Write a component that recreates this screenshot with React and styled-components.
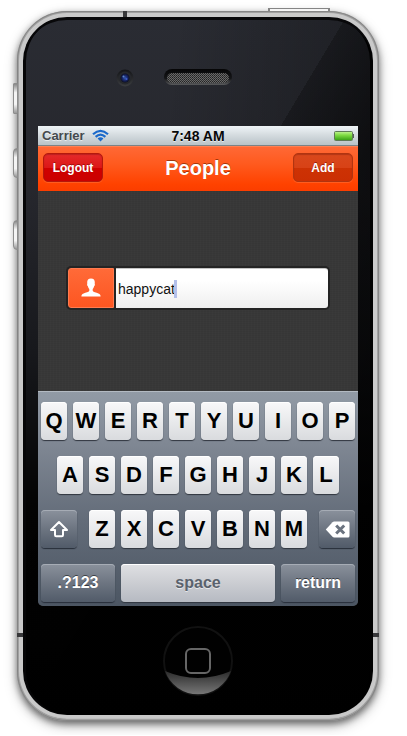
import React, { useState } from "react";
import styled, { createGlobalStyle, css } from "styled-components";

const GlobalStyle = createGlobalStyle`
  *, *::before, *::after { box-sizing: border-box; }
  body {
    margin: 0;
    background: #fff;
    font-family: "Liberation Sans", Arial, sans-serif;
  }
  button, input { font-family: inherit; margin: 0; }
`;

const Page = styled.main`
  padding: 11px 28px 14px 17px;
`;

const Phone = styled.div`
  position: relative;
  padding: 6px;
  border-radius: 50px;
  background: #c9c9c9;
  box-shadow:
    inset 0 0 0 1px #858585,
    inset 0 0 0 2px #a0a0a0,
    inset 0 -2px 1px #777,
    0 3px 7px rgba(0, 0, 0, 0.5),
    0 5px 14px rgba(0, 0, 0, 0.22);
`;

const Glass = styled.div`
  position: relative;
  padding: 0 15px;
  border-radius: 44px;
  background:
    linear-gradient(121deg, transparent 42%, rgba(0, 0, 0, 0.25) 42%, rgba(0, 0, 0, 0.5) 55%),
    linear-gradient(97deg, transparent 35%, rgba(0, 0, 0, 0.4) 100%),
    linear-gradient(#2a2c33, #26272d 25%, #17181c 48%, #030303 70%, #000);
  box-shadow: inset 0 3px 0 #08080a, inset 3px 0 0 #060607, inset -3px 0 0 #000;
`;

const sideVariants = {
  mute: css`top: 72px; height: 31px;`,
  up: css`top: 137px; height: 30px;`,
  down: css`top: 209px; height: 30px;`,
};

const SideButton = styled.span`
  position: absolute;
  left: -4px;
  width: 5px;
  border: 1px solid #8d8d8d;
  border-radius: ${(p) => (p.$kind === "mute" ? "1px" : "4px 0 0 4px")};
  background: linear-gradient(#888, #f4f4f4 30%, #f4f4f4 70%, #999);
  ${(p) => sideVariants[p.$kind]}
`;

const PowerButton = styled.span`
  position: absolute;
  top: -3px;
  right: 49px;
  width: 62px;
  height: 4px;
  border: 1px solid #858585;
  border-left-width: 2px;
  border-right-width: 2px;
  background: #f5f5f5;
`;

const seamVariants = {
  top: css`left: 106px; top: 0; width: 4px; height: 6px;`,
  left: css`left: 0; bottom: 84px; width: 6px; height: 4px;`,
  right: css`right: 0; bottom: 84px; width: 6px; height: 4px;`,
};

const Seam = styled.span`
  position: absolute;
  background: #38383a;
  ${(p) => seamVariants[p.$edge]}
`;

const TopBezel = styled.div`
  display: grid;
  grid-template-columns: 1fr auto 1fr;
  align-items: center;
  height: 109px;
  padding-top: 12px;
`;

const CameraSlot = styled.div`
  display: flex;
  justify-content: flex-end;
  padding-right: 30px;
`;

const BottomBezel = styled.div`
  display: flex;
  align-items: center;
  justify-content: center;
  height: 109px;
`;

const HomeButton = styled.button`
  width: 70px;
  height: 70px;
  padding: 0;
  border: 0;
  border-radius: 50%;
  background: #000;
  svg { display: block; }
`;

const Screen = styled.section`
  overflow: hidden;
  border-radius: 0 0 5px 5px;
  background: #373737;
`;

const StatusBar = styled.div`
  display: grid;
  grid-template-columns: 1fr auto 1fr;
  align-items: center;
  height: 20px;
  padding: 0 4px;
  border-bottom: 1px solid #7d8286;
  background: linear-gradient(#eff4f7, #d3dade 50%, #b9c3c8);
  text-shadow: 0 1px 0 rgba(255, 255, 255, 0.6);
`;

const Carrier = styled.span`
  display: flex;
  align-items: center;
  gap: 7px;
  font-size: 13px;
  font-weight: bold;
  line-height: 18px;
  color: #44494d;
`;

const Clock = styled.time`
  font-size: 14px;
  font-weight: bold;
  line-height: 18px;
  color: #080808;
`;

const BatterySlot = styled.span`
  display: flex;
  justify-content: flex-end;
`;

const NavBar = styled.header`
  display: flex;
  align-items: center;
  justify-content: space-between;
  height: 45px;
  padding: 0 5px 2px;
  background: linear-gradient(#ff6937, #ff5a1e 40%, #ff4200 85%, #fb3d00);
  box-shadow: inset 0 1px 0 #ff8052;
`;

const NavTitle = styled.h1`
  margin: 0;
  font-size: 20px;
  line-height: 24px;
  color: #fff;
  text-shadow: 0 -1px 0 rgba(100, 30, 0, 0.6);
`;

const NavButton = styled.button`
  width: 60px;
  height: 29px;
  padding: 0;
  border: 1px solid ${(p) => (p.$danger ? "#b4180c" : "#b13410")};
  border-radius: 5px;
  background: ${(p) =>
    p.$danger
      ? "linear-gradient(#e42a2a, #dc1717 50%, #cf0000 50%, #cb0000)"
      : "linear-gradient(#d9481c, #d84216 50%, #cd3204 50%, #cb2f03)"};
  box-shadow: inset 0 1px 1px rgba(70, 0, 0, 0.25), 0 1px 0 rgba(255, 140, 90, 0.35);
  font-size: 12px;
  font-weight: bold;
  line-height: 16px;
  color: #fff;
  text-shadow: 0 -1px 0 rgba(90, 0, 0, 0.5);
`;

const Content = styled.div`
  display: flex;
  flex-direction: column;
  justify-content: center;
  height: 200px;
  padding: 0 28px 7px;
  background:
    repeating-linear-gradient(90deg, rgba(255, 255, 255, 0.01) 0 1px, transparent 1px 3px),
    repeating-linear-gradient(rgba(0, 0, 0, 0.03) 0 1px, transparent 1px 2px),
    #383838;
`;

const Field = styled.label`
  display: flex;
  gap: 2px;
  height: 44px;
  padding: 2px;
  border-radius: 5px;
  background: #242424;
`;

const FieldIcon = styled.span`
  display: flex;
  align-items: center;
  justify-content: center;
  width: 46px;
  border: 1px solid #ff7b50;
  border-radius: 3px 0 0 3px;
  background: linear-gradient(#ff6a38, #fd5621);
`;

const FieldBody = styled.span`
  display: flex;
  flex: 1;
  align-items: center;
  min-width: 0;
  padding: 2px 2px 0;
  border-top: 1px solid #c4c4c4;
  border-radius: 0 3px 3px 0;
  background: linear-gradient(#fff, #fff 30%, #efefef);
`;

const NameInput = styled.input`
  field-sizing: content;
  min-width: 1px;
  max-width: 100%;
  padding: 0;
  border: 0;
  outline: 0;
  background: transparent;
  font-size: 14px;
  line-height: 18px;
  color: #111;
`;

const Caret = styled.span`
  width: 3px;
  height: 18px;
  margin-left: -1px;
  background: #b4c0ea;
`;

const Keyboard = styled.div`
  display: flex;
  flex-direction: column;
  gap: 16px;
  padding: 11px 0 4px;
  background: linear-gradient(#929ba6, #7f8793 25%, #636c79 60%, #4c5663);
  box-shadow: inset 0 1px 0 #b3bac2;
`;

const KeyRow = styled.div`
  display: flex;
  gap: 6px;
  padding: 0 ${(p) => (p.$inset ? "19px" : "3px")};
`;

const LetterGroup = styled.div`
  display: flex;
  flex: 1;
  gap: 6px;
  padding: 0 6px;
`;

const Key = styled.button`
  display: flex;
  flex: 1 1 0;
  align-items: center;
  justify-content: center;
  min-width: 0;
  height: 38px;
  padding: 0;
  border: 0;
  border-radius: 4px;
  background: linear-gradient(#f8f8f9, #e9eaec 50%, #d9dbde);
  box-shadow: inset 0 1px 0 #fff, 0 1px 1px #30363f;
  font-size: 22px;
  font-weight: bold;
  line-height: 26px;
  color: #000;
`;

const WideKey = styled(Key)`
  flex: ${(p) => (p.$size === "space" ? "1 1 0" : p.$size === "word" ? "0 0 74px" : "0 0 36px")};
  font-size: 16px;
  line-height: 20px;
  ${(p) =>
    p.$size === "space"
      ? css`
          background: linear-gradient(#dfe0e3, #cbcdd2 50%, #b6bac2);
          color: #5a626d;
          text-shadow: 0 1px 0 rgba(255, 255, 255, 0.6);
        `
      : css`
          background: linear-gradient(#8a919c, #6d7581 50%, #515b69);
          box-shadow: inset 0 1px 0 #a6acb5, 0 1px 1px #272e39;
          color: #fff;
          text-shadow: 0 -1px 0 rgba(0, 0, 0, 0.5);
        `}
`;

function Camera() {
  return (
    <svg width="18" height="18" viewBox="0 0 18 18" aria-hidden="true">
      <defs>
        <radialGradient id="lens">
          <stop offset="0" stopColor="#3459a8" />
          <stop offset=".5" stopColor="#1b2a72" />
          <stop offset="1" stopColor="#0b0f24" />
        </radialGradient>
        <linearGradient id="lensRing" x2="0" y2="1">
          <stop offset="0" stopColor="#131417" />
          <stop offset="1" stopColor="#3b3d40" />
        </linearGradient>
      </defs>
      <circle cx="9" cy="9" r="8.5" fill="url(#lensRing)" />
      <circle cx="9" cy="9" r="6.5" fill="#26282c" />
      <circle cx="9" cy="9" r="4.5" fill="url(#lens)" />
      <circle cx="7.5" cy="7.5" r="1" fill="#5d86c8" />
      <circle cx="10.5" cy="10" r="1" fill="#3c5ed0" />
    </svg>
  );
}

function Speaker() {
  return (
    <svg width="68" height="17" viewBox="0 0 68 17" aria-hidden="true">
      <defs>
        <pattern id="mesh" width="2" height="2" patternUnits="userSpaceOnUse">
          <rect width="2" height="2" fill="#686868" />
          <rect width="1" height="1" fill="#222" />
          <rect x="1" y="1" width="1" height="1" fill="#333" />
        </pattern>
        <linearGradient id="speakerRim" x2="0" y2="1">
          <stop offset="0" stopColor="#050506" />
          <stop offset=".6" stopColor="#151618" />
          <stop offset="1" stopColor="#5a5b5d" />
        </linearGradient>
      </defs>
      <rect width="68" height="16" rx="8" fill="url(#speakerRim)" />
      <rect x="3" y="4" width="62" height="10" rx="5" fill="url(#mesh)" />
    </svg>
  );
}

function HomeGlyph() {
  return (
    <svg width="70" height="70" viewBox="0 0 70 70" aria-hidden="true">
      <defs>
        <linearGradient id="homeShine" x2="0" y2="1">
          <stop offset="0" stopColor="#2b2b2b" />
          <stop offset="1" stopColor="#777" />
        </linearGradient>
      </defs>
      <circle cx="35" cy="35" r="34" fill="#010101" stroke="#111" strokeWidth="2" />
      <path d="M2 45Q35 59 68 45A35 35 0 0 1 2 45Z" fill="url(#homeShine)" />
      <rect x="23" y="23" width="24" height="24" rx="5" fill="none" stroke="#666" strokeWidth="2" />
    </svg>
  );
}

function Wifi() {
  return (
    <svg width="17" height="13" viewBox="0 0 17 13" aria-hidden="true">
      <g fill="none" stroke="#1c6acb" strokeWidth="2.2">
        <path d="M1 5.200Q8.500-1.600 16 5.200" />
        <path d="M3.600 7.900Q8.500 3.400 13.400 7.900" />
      </g>
      <path d="M5.600 9.600Q8.500 7 11.400 9.600L8.500 12.600Z" fill="#1c6acb" />
    </svg>
  );
}

function Battery() {
  return (
    <svg width="20" height="10" viewBox="0 0 20 10" aria-hidden="true">
      <defs>
        <linearGradient id="charge" x2="0" y2="1">
          <stop offset="0" stopColor="#b9f08a" />
          <stop offset=".4" stopColor="#7edb42" />
          <stop offset="1" stopColor="#3ba317" />
        </linearGradient>
      </defs>
      <rect x=".5" y=".5" width="18" height="9" rx="1" fill="#a5d78a" stroke="#5f7a56" />
      <rect x="1" y="1" width="17" height="8" fill="url(#charge)" />
      <path d="M19 3h1v4h-1z" fill="#566154" />
    </svg>
  );
}

function Person() {
  return (
    <svg width="20" height="19" viewBox="0 0 20 19" aria-hidden="true">
      <path
        d="M10 .5C7.400.5 6 2 6.200 4.700c0 .4 0 .9.100 1.300-.5.300-.2 1.800.5 2.100.3 1.500.9 2.300 1.500 3v1.700C7.700 14.300 4.900 14.600 2.600 15.400.9 16 .4 16.800.4 18.600h19.200c0-1.800-.5-2.600-2.200-3.200-2.300-.8-5.100-1.100-5.700-2.600v-1.700c.6-.7 1.200-1.500 1.500-3 .7-.3 1-1.800.5-2.100 0-.4.1-.9.100-1.300C14 2 12.600.5 10 .5Z"
        fill="#fff"
      />
    </svg>
  );
}

function ShiftIcon() {
  return (
    <svg width="20" height="18" viewBox="0 0 20 18" aria-hidden="true">
      <path
        d="M10 2 18 10H14v5q0 1.200-1.200 1.200H7.200Q6 16.200 6 15V10H2Z"
        fill="none"
        stroke="#fff"
        strokeWidth="2"
        strokeLinejoin="round"
      />
    </svg>
  );
}

function DeleteIcon() {
  return (
    <svg width="25" height="17" viewBox="0 0 25 17" aria-hidden="true">
      <path d="M.8 8.500 7.500 1.200Q8.200.5 9.200.5h13.800q1.500 0 1.500 1.500v13q0 1.500-1.500 1.500H9.200q-1 0-1.700-.7Z" fill="#fff" />
      <path d="m11.200 4.500 8 8m0-8-8 8" stroke="#6c7480" strokeWidth="3" />
    </svg>
  );
}

export default function App() {
  const [name, setName] = useState("happycat");
  const type = (text) => setName((current) => current + text);
  const letters = (row) =>
    row.split("").map((letter) => (
      <Key key={letter} type="button" onClick={() => type(letter.toLowerCase())}>
        {letter}
      </Key>
    ));

  return (
    <>
      <GlobalStyle />
      <Page>
        <Phone>
          <SideButton $kind="mute" />
          <SideButton $kind="up" />
          <SideButton $kind="down" />
          <PowerButton />
          <Seam $edge="top" />
          <Seam $edge="left" />
          <Seam $edge="right" />
          <Glass>
            <TopBezel>
              <CameraSlot>
                <Camera />
              </CameraSlot>
              <Speaker />
            </TopBezel>
            <Screen>
              <StatusBar>
                <Carrier>
                  Carrier
                  <Wifi />
                </Carrier>
                <Clock>7:48 AM</Clock>
                <BatterySlot>
                  <Battery />
                </BatterySlot>
              </StatusBar>
              <NavBar>
                <NavButton type="button" $danger>Logout</NavButton>
                <NavTitle>People</NavTitle>
                <NavButton type="button">Add</NavButton>
              </NavBar>
              <Content>
                <Field>
                  <FieldIcon>
                    <Person />
                  </FieldIcon>
                  <FieldBody>
                    <NameInput
                      type="text"
                      aria-label="Username"
                      value={name}
                      onChange={(event) => setName(event.target.value)}
                    />
                    <Caret />
                  </FieldBody>
                </Field>
              </Content>
              <Keyboard>
                <KeyRow>{letters("QWERTYUIOP")}</KeyRow>
                <KeyRow $inset>{letters("ASDFGHJKL")}</KeyRow>
                <KeyRow>
                  <WideKey type="button" aria-label="Shift">
                    <ShiftIcon />
                  </WideKey>
                  <LetterGroup>{letters("ZXCVBNM")}</LetterGroup>
                  <WideKey type="button" aria-label="Delete" onClick={() => setName(name.slice(0, -1))}>
                    <DeleteIcon />
                  </WideKey>
                </KeyRow>
                <KeyRow>
                  <WideKey type="button" $size="word">.?123</WideKey>
                  <WideKey type="button" $size="space" onClick={() => type(" ")}>space</WideKey>
                  <WideKey type="button" $size="word">return</WideKey>
                </KeyRow>
              </Keyboard>
            </Screen>
            <BottomBezel>
              <HomeButton type="button" aria-label="Home">
                <HomeGlyph />
              </HomeButton>
            </BottomBezel>
          </Glass>
        </Phone>
      </Page>
    </>
  );
}
